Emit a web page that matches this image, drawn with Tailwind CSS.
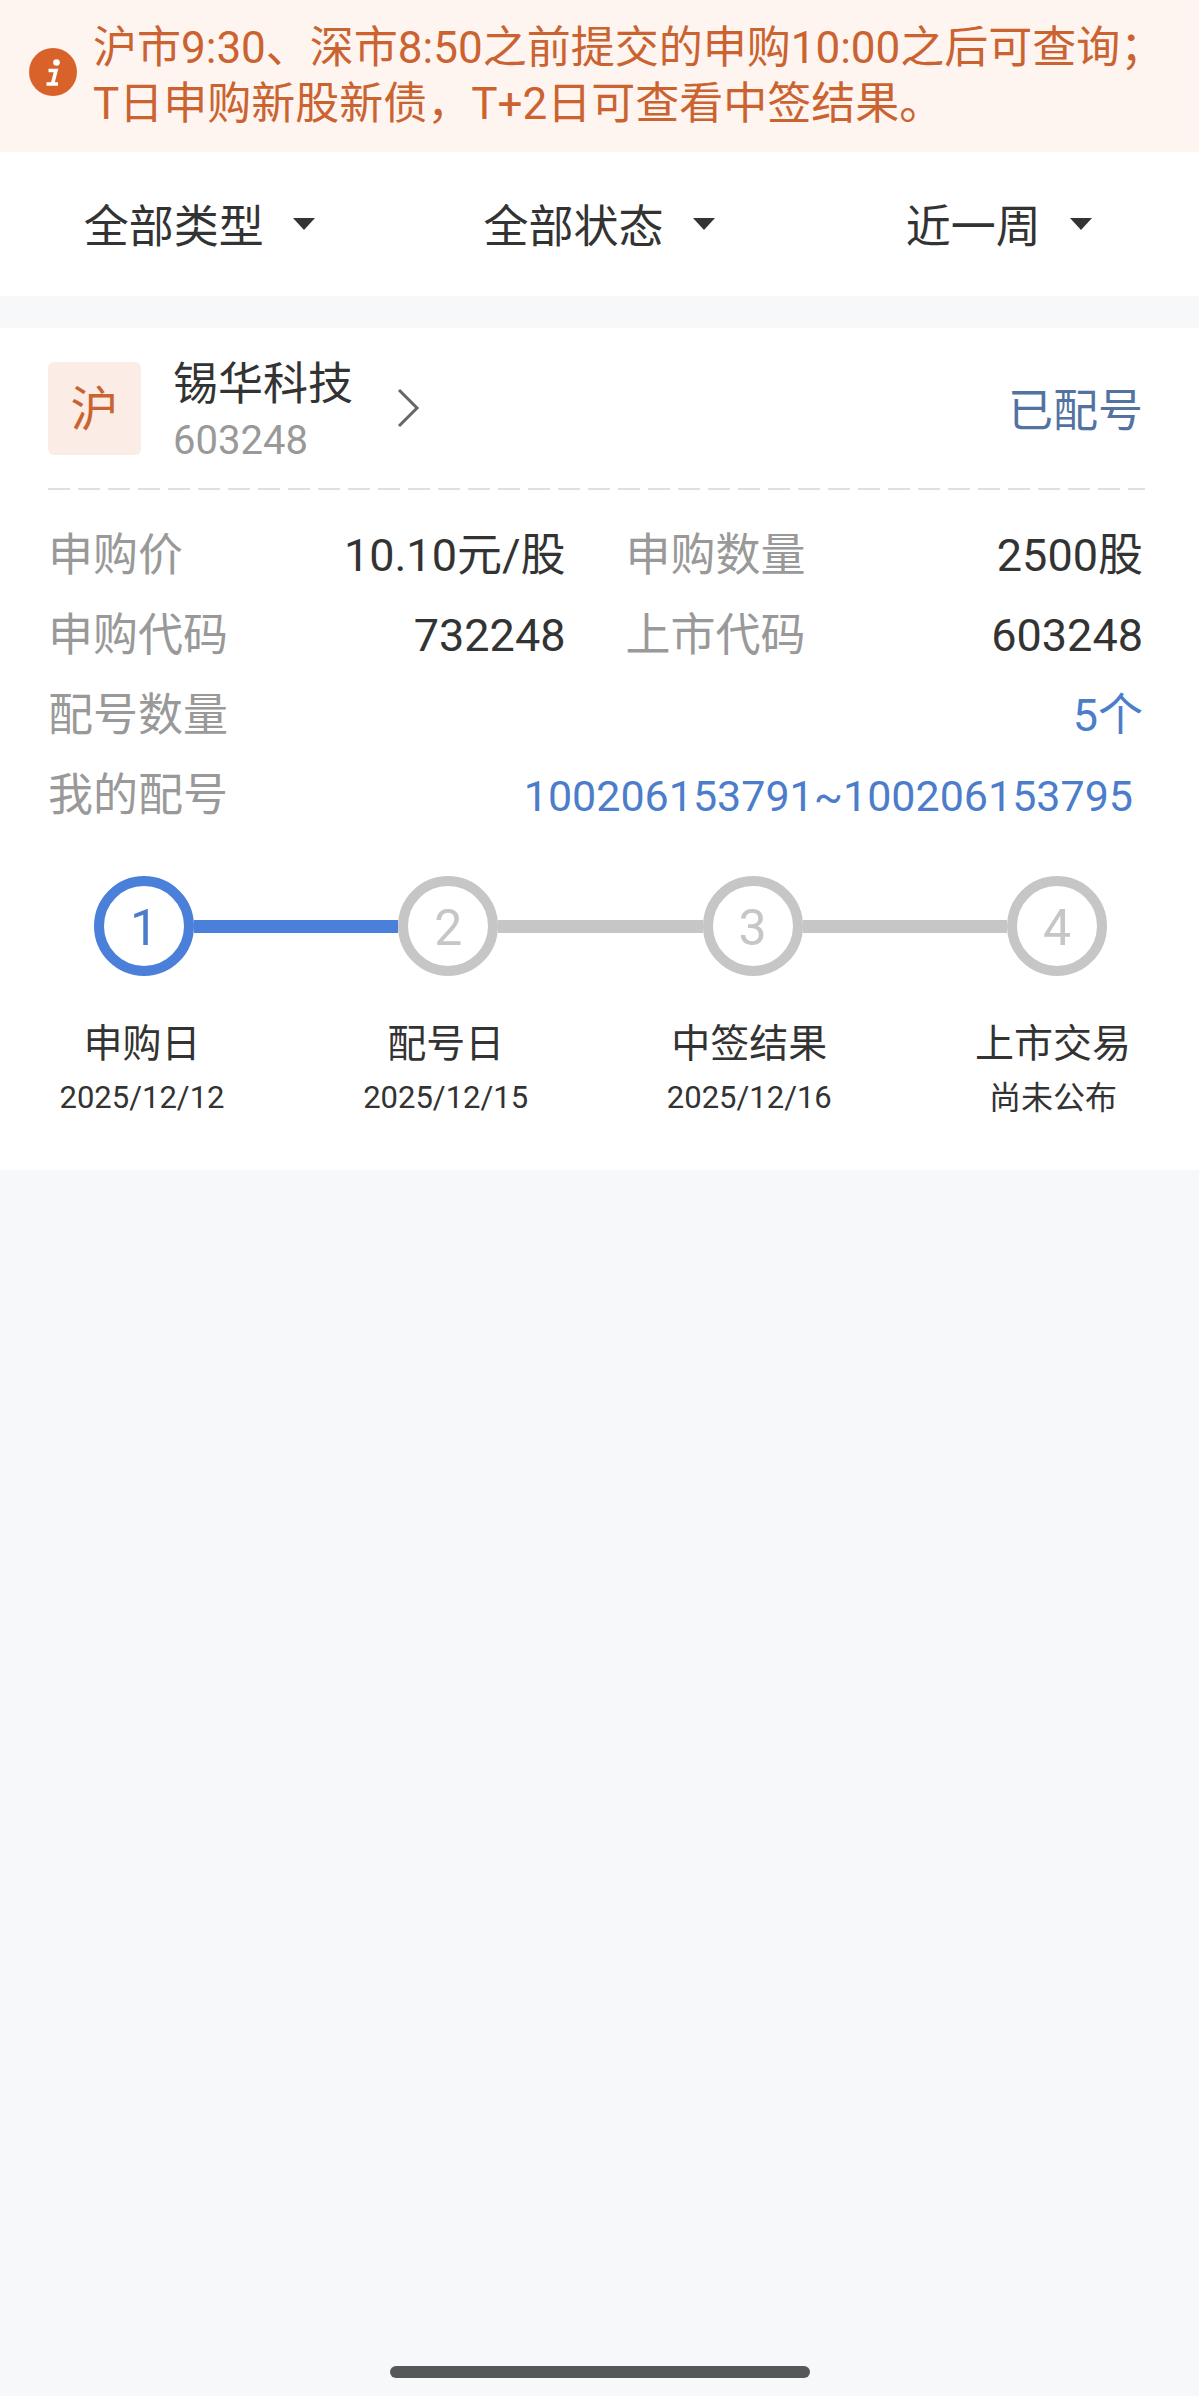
<!DOCTYPE html>
<html lang="zh-CN">
<head>
<meta charset="utf-8">
<meta name="viewport" content="width=device-width, initial-scale=1">
<title>申购查询</title>
<script src="https://cdn.jsdelivr.net/npm/@tailwindcss/browser@4"></script>
</head>
<body class="flex min-h-screen flex-col bg-[#f7f8fa] font-[Roboto,'Noto_Sans_CJK_SC',sans-serif] text-[45px] leading-[56px] text-[#333]">
  <aside class="flex items-start gap-4 bg-[#fef4f0] py-5 pr-6 pl-[29px] text-[44px] text-[#ca6330]">
    <svg class="mt-7 size-12 shrink-0" viewBox="0 0 48 48" aria-hidden="true">
      <circle cx="24" cy="24" r="24" fill="#d9622b"/>
      <circle cx="27.500" cy="14.500" r="3.300" fill="#fff"/>
      <path d="M19.500 22.500H27L23.500 36M17.500 36H29" fill="none" stroke="#fff" stroke-width="3.600"/>
    </svg>
    <p>沪市9:30、深市8:50之前提交的申购10:00之后可查询；<br>T日申购新股新债，T+2日可查看中签结果。</p>
  </aside>

  <form class="grid grid-cols-3 bg-white py-10" aria-label="筛选">
    <label class="flex items-center justify-center gap-7">
      <select class="field-sizing-content appearance-none pt-2 leading-[56px]" aria-label="类型"><option>全部类型</option></select>
      <svg class="h-3 w-6" viewBox="0 0 24 12" fill="#333" aria-hidden="true"><path d="M1 0H23L12 12Z"/></svg>
    </label>
    <label class="flex items-center justify-center gap-7">
      <select class="field-sizing-content appearance-none pt-2 leading-[56px]" aria-label="状态"><option>全部状态</option></select>
      <svg class="h-3 w-6" viewBox="0 0 24 12" fill="#333" aria-hidden="true"><path d="M1 0H23L12 12Z"/></svg>
    </label>
    <label class="flex items-center justify-center gap-7">
      <select class="field-sizing-content appearance-none pt-2 leading-[56px]" aria-label="时间"><option>近一周</option></select>
      <svg class="h-3 w-6" viewBox="0 0 24 12" fill="#333" aria-hidden="true"><path d="M1 0H23L12 12Z"/></svg>
    </label>
  </form>

  <main class="mt-8 bg-white pb-[46px]">
    <header class="flex h-40 items-center pr-14 pl-12">
      <a href="#detail" class="flex items-center">
        <span class="flex size-[93px] items-center justify-center rounded-md bg-[#fbede5] pt-1 text-[48px] text-[#ca6330]">沪</span>
        <span class="ml-8 flex flex-col pt-2.5">
          <span>锡华科技</span>
          <span class="text-[40px] text-[#999]">603248</span>
        </span>
        <svg class="ml-11 h-10 w-6" viewBox="0 0 24 40" fill="none" stroke="#666" stroke-width="3" aria-hidden="true"><path d="M2 2L20 20L2 38"/></svg>
      </a>
      <span class="ml-auto pt-2 text-[#5273a2]">已配号</span>
    </header>
    <div class="mr-[54px] ml-12 h-[2px] bg-[repeating-linear-gradient(to_right,#dfdfdf_0_22px,transparent_22px_30px)]"></div>

    <dl class="mt-[26px] mr-14 ml-12 grid grid-cols-2 gap-x-[60px] leading-[80px]">
      <div class="flex justify-between"><dt class="text-[#999]">申购价</dt><dd>10.10元/股</dd></div>
      <div class="flex justify-between"><dt class="text-[#999]">申购数量</dt><dd>2500股</dd></div>
      <div class="flex justify-between"><dt class="text-[#999]">申购代码</dt><dd>732248</dd></div>
      <div class="flex justify-between"><dt class="text-[#999]">上市代码</dt><dd>603248</dd></div>
      <div class="col-span-2 flex justify-between"><dt class="text-[#999]">配号数量</dt><dd class="text-[#4c7dca]">5个</dd></div>
      <div class="col-span-2 flex justify-between"><dt class="text-[#999]">我的配号</dt><dd class="pr-2.5 text-[43px] text-[#4c7dca]">100206153791~100206153795</dd></div>
    </dl>

    <div class="mt-10 mr-[92px] ml-[94px] flex items-center text-[50px] text-[#c6c6c6]" aria-hidden="true">
      <span class="flex size-[100px] items-center justify-center rounded-full border-[10px] border-[#4a7fda] pt-1 text-[#4c7dca]">1</span>
      <span class="h-[13px] flex-1 bg-[#4a7fda]"></span>
      <span class="flex size-[100px] items-center justify-center rounded-full border-[10px] border-[#c6c6c6] pt-1">2</span>
      <span class="h-[13px] flex-1 bg-[#c6c6c6]"></span>
      <span class="flex size-[100px] items-center justify-center rounded-full border-[10px] border-[#c6c6c6] pt-1">3</span>
      <span class="h-[13px] flex-1 bg-[#c6c6c6]"></span>
      <span class="flex size-[100px] items-center justify-center rounded-full border-[10px] border-[#c6c6c6] pt-1">4</span>
    </div>
    <ol class="mt-10 mr-[52px] ml-12 flex justify-between text-center text-[39px]">
      <li class="w-[188px]">申购日<time class="block text-[31px] leading-[52px]">2025/12/12</time></li>
      <li class="w-[188px]">配号日<time class="block text-[31px] leading-[52px]">2025/12/15</time></li>
      <li class="w-[188px]">中签结果<time class="block text-[31px] leading-[52px]">2025/12/16</time></li>
      <li class="w-[188px]">上市交易<span class="block text-[32px] leading-[52px]">尚未公布</span></li>
    </ol>
  </main>

  <div class="mt-auto flex justify-center pb-[18px]"><span class="h-3 w-[420px] rounded-full bg-[#565857]"></span></div>
</body>
</html>
